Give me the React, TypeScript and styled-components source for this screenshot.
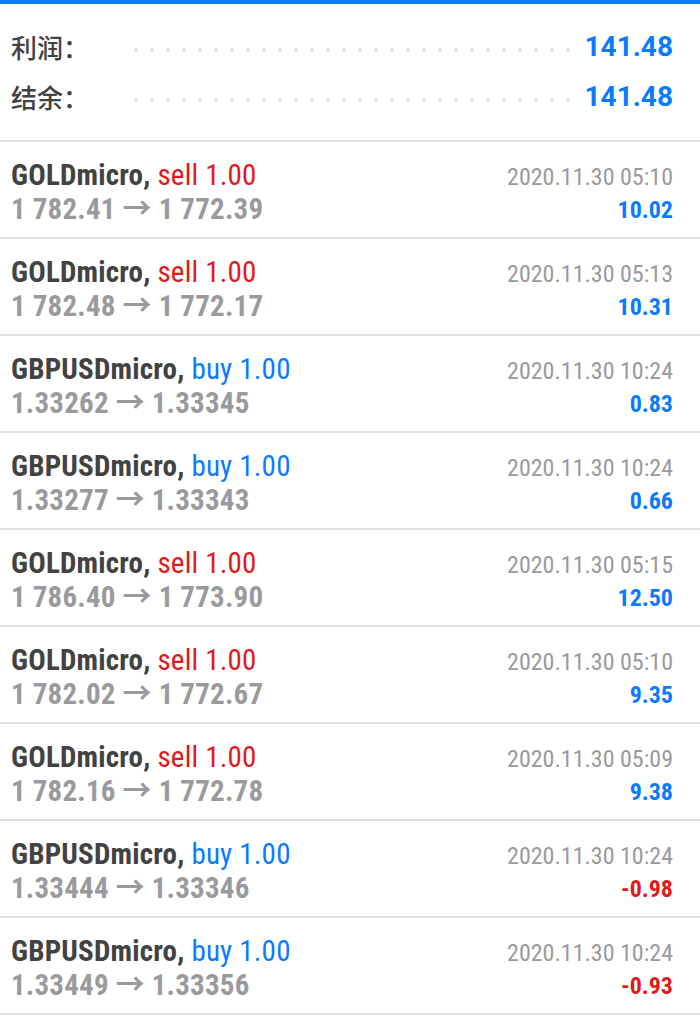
import React from "react";
import styled, { createGlobalStyle } from "styled-components";

type Trade = {
  symbol: string;
  side: "buy" | "sell";
  volume: string;
  open: string;
  close: string;
  time: string;
  profit: string;
};

const trades: Trade[] = [
  { symbol: "GOLDmicro", side: "sell", volume: "1.00", open: "1 782.41", close: "1 772.39", time: "2020.11.30 05:10", profit: "10.02" },
  { symbol: "GOLDmicro", side: "sell", volume: "1.00", open: "1 782.48", close: "1 772.17", time: "2020.11.30 05:13", profit: "10.31" },
  { symbol: "GBPUSDmicro", side: "buy", volume: "1.00", open: "1.33262", close: "1.33345", time: "2020.11.30 10:24", profit: "0.83" },
  { symbol: "GBPUSDmicro", side: "buy", volume: "1.00", open: "1.33277", close: "1.33343", time: "2020.11.30 10:24", profit: "0.66" },
  { symbol: "GOLDmicro", side: "sell", volume: "1.00", open: "1 786.40", close: "1 773.90", time: "2020.11.30 05:15", profit: "12.50" },
  { symbol: "GOLDmicro", side: "sell", volume: "1.00", open: "1 782.02", close: "1 772.67", time: "2020.11.30 05:10", profit: "9.35" },
  { symbol: "GOLDmicro", side: "sell", volume: "1.00", open: "1 782.16", close: "1 772.78", time: "2020.11.30 05:09", profit: "9.38" },
  { symbol: "GBPUSDmicro", side: "buy", volume: "1.00", open: "1.33444", close: "1.33346", time: "2020.11.30 10:24", profit: "-0.98" },
  { symbol: "GBPUSDmicro", side: "buy", volume: "1.00", open: "1.33449", close: "1.33356", time: "2020.11.30 10:24", profit: "-0.93" },
];

const BLUE = "#0a7bff";
const RED = "#e3191c";

const App = () => {
  return (
    <>
      <GlobalStyle />
      <S.Page>
        <S.TopBar />
        <S.Summary>
          <S.SummaryRow>
            <S.Label>利润：</S.Label>
            <S.Dots />
            <S.Total>141.48</S.Total>
          </S.SummaryRow>
          <S.SummaryRow>
            <S.Label>结余：</S.Label>
            <S.Dots />
            <S.Total>141.48</S.Total>
          </S.SummaryRow>
        </S.Summary>
        {trades.map((t, i) => (
          <S.TradeRow key={i}>
            <S.Left>
              <S.Title>
                {t.symbol},{" "}
                <S.Side $buy={t.side === "buy"}>
                  {t.side} {t.volume}
                </S.Side>
              </S.Title>
              <S.Prices>
                {t.open} → {t.close}
              </S.Prices>
            </S.Left>
            <S.Right>
              <S.Time>{t.time}</S.Time>
              <S.Profit $negative={t.profit.startsWith("-")}>{t.profit}</S.Profit>
            </S.Right>
          </S.TradeRow>
        ))}
      </S.Page>
    </>
  );
};

export default App;

const GlobalStyle = createGlobalStyle`
  body {
    margin: 0;
    background: #fff;
    font-family: "Roboto Condensed", "Liberation Sans Narrow", Roboto, "Noto Sans CJK SC", sans-serif;
  }
`;

const S = {
  Page: styled.div`
    width: 700px;
    background: #fff;
  `,
  TopBar: styled.div`
    height: 4px;
    background: ${BLUE};
  `,
  Summary: styled.div`
    display: flex;
    flex-direction: column;
    gap: 10px;
    padding: 22px 27px 24px 11px;
    border-bottom: 2px solid #e1e1e1;
  `,
  SummaryRow: styled.div`
    display: flex;
    align-items: center;
    height: 40px;
  `,
  Label: styled.span`
    width: 117px;
    font-family: "Noto Sans CJK SC", sans-serif;
    font-size: 26px;
    font-weight: 500;
    color: #424242;
  `,
  Dots: styled.div`
    flex: 1;
    height: 4px;
    margin: 8px 4px 0 0;
    background-image: radial-gradient(circle, #e4e4e4 1.8px, transparent 2.2px);
    background-size: 16px 4px;
    background-position: 0 0;
  `,
  Total: styled.span`
    font-family: Roboto, sans-serif;
    font-weight: 700;
    font-size: 28px;
    color: ${BLUE};
  `,
  TradeRow: styled.div`
    display: flex;
    justify-content: space-between;
    height: 95px;
    padding: 0 27px 0 11px;
    border-bottom: 2px solid #e1e1e1;
  `,
  Left: styled.div`
    display: flex;
    flex-direction: column;
    padding-top: 16px;
    letter-spacing: 0.2px;
  `,
  Right: styled.div`
    display: flex;
    flex-direction: column;
    align-items: flex-end;
    gap: 3px;
    padding-top: 20px;
  `,
  Title: styled.div`
    font-size: 29px;
    line-height: 34px;
    font-weight: 700;
    color: #424242;
  `,
  Side: styled.span<{ $buy: boolean }>`
    font-weight: 400;
    color: ${(p) => (p.$buy ? BLUE : RED)};
  `,
  Prices: styled.div`
    font-size: 29px;
    line-height: 34px;
    font-weight: 700;
    color: #9a9a9e;
  `,
  Time: styled.div`
    font-size: 24px;
    line-height: 30px;
    color: #9a9a9e;
  `,
  Profit: styled.div<{ $negative: boolean }>`
    font-size: 24px;
    line-height: 30px;
    font-weight: 700;
    color: ${(p) => (p.$negative ? RED : BLUE)};
  `,
};
